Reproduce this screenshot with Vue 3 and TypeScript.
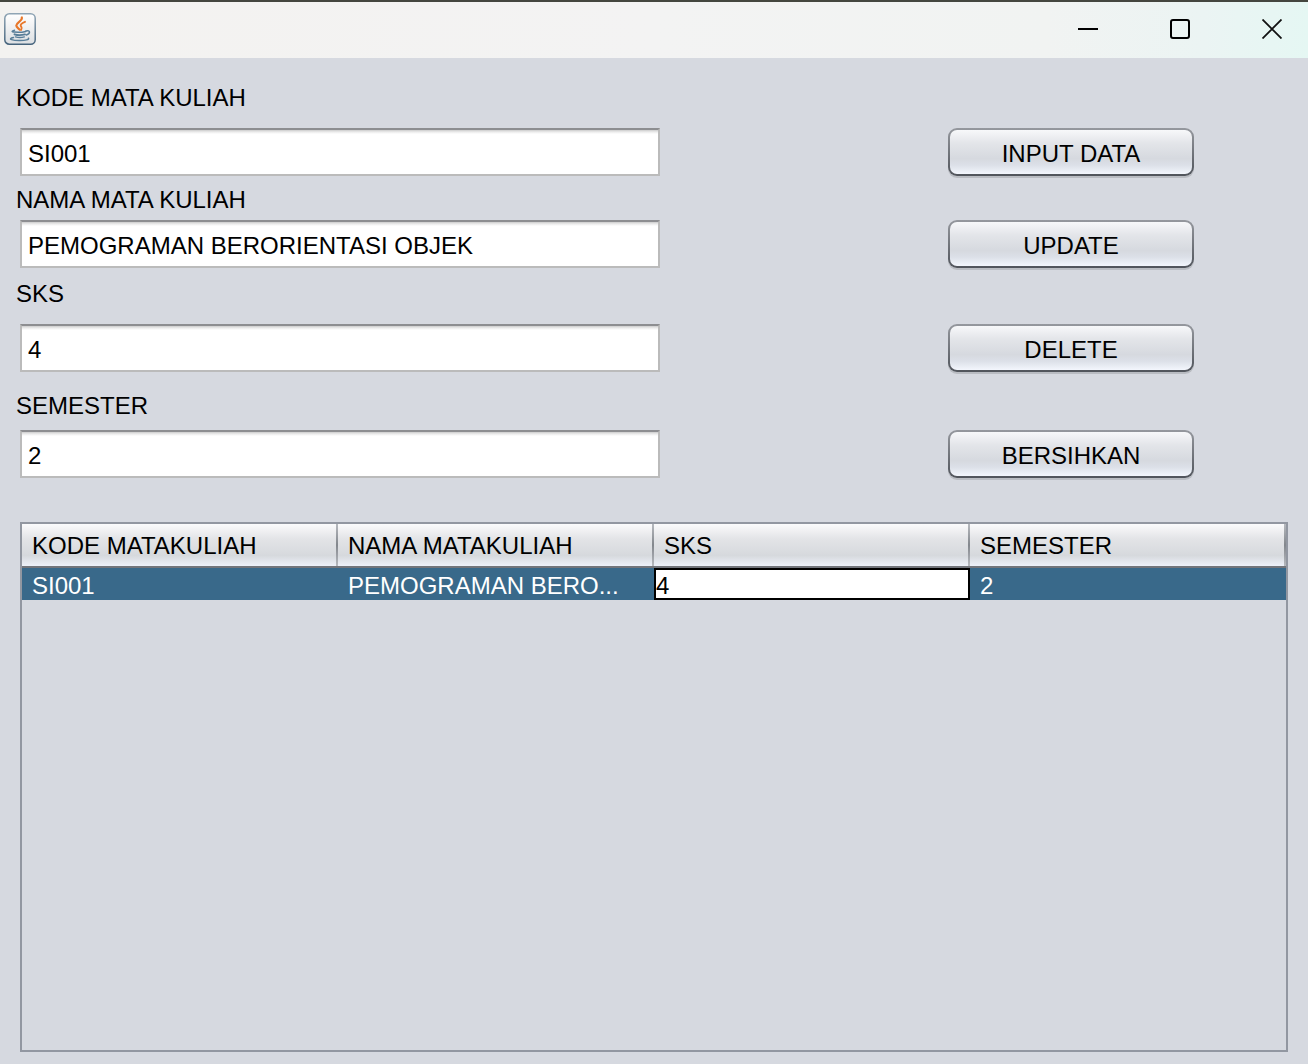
<script setup lang="ts">
import { ref } from 'vue'

interface Field {
  id: string
  label: string
  value: string
  action: string
}

const fields = ref<Field[]>([
  { id: 'kode', label: 'KODE MATA KULIAH', value: 'SI001', action: 'INPUT DATA' },
  { id: 'nama', label: 'NAMA MATA KULIAH', value: 'PEMOGRAMAN BERORIENTASI OBJEK', action: 'UPDATE' },
  { id: 'sks', label: 'SKS', value: '4', action: 'DELETE' },
  { id: 'semester', label: 'SEMESTER', value: '2', action: 'BERSIHKAN' },
])

const columns: string[] = ['KODE MATAKULIAH', 'NAMA MATAKULIAH', 'SKS', 'SEMESTER']
const editedSks = ref('4')
</script>

<template>
  <div class="window">
    <header class="titlebar">
      <svg class="app-icon" viewBox="0 0 32 32" aria-hidden="true">
        <defs>
          <linearGradient id="tile" x1="0" y1="0" x2="0" y2="1">
            <stop offset="0" stop-color="#ffffff" />
            <stop offset="1" stop-color="#dcdfe2" />
          </linearGradient>
          <linearGradient id="edge" x1="0" y1="0" x2="0" y2="1">
            <stop offset="0" stop-color="#8fa5b5" />
            <stop offset="1" stop-color="#45637c" />
          </linearGradient>
        </defs>
        <rect x="0.8" y="0.8" width="30.4" height="30.4" rx="4.5" fill="url(#tile)" stroke="url(#edge)" stroke-width="1.5" />
        <g fill="none" stroke="#e8772a" stroke-linecap="round">
          <path d="M17.800 4.500c1.200 3.200-5.500 5-5.500 8 0 1.800 2.400 2.800 3.400 4.200" stroke-width="2.200" />
          <path d="M21 8.800c-2.800 1.200-4.800 2.200-4.300 3.900.4 1.300 2.200 1.900.4 4.200" stroke-width="1.900" />
        </g>
        <g fill="none" stroke="#587d98" stroke-linecap="round">
          <path d="M10.500 17.300c-2.500.6-3.500 1.500-.2 1.800 3.700.3 8.200.1 11.400-.7" stroke-width="1.500" />
          <path d="M10.500 21.300c2.800 1 7.500.9 10.500.1" stroke-width="1.900" />
          <path d="M11.500 23.900c2.800.8 6 .8 8.800 0" stroke-width="1.500" />
          <path d="M22 18c4.600-1.300 4.500 2.700.4 4" stroke-width="1.500" />
          <path d="M9.500 24.600c-6.800 1.300-.5 3.100 6.500 3 5.500-.1 9.500-1 8.500-2.400" stroke-width="1.500" />
        </g>
      </svg>
      <div class="controls">
        <button type="button" class="control" aria-label="Minimize">
          <svg viewBox="0 0 20 20"><path d="M0 10h20" stroke="#000" stroke-width="2" /></svg>
        </button>
        <button type="button" class="control" aria-label="Maximize">
          <svg viewBox="0 0 20 20"><rect x="1" y="1" width="18" height="18" rx="2" fill="none" stroke="#000" stroke-width="2" /></svg>
        </button>
        <button type="button" class="control close" aria-label="Close">
          <svg viewBox="0 0 20 20"><path d="M.5.5l19 19M19.500.5l-19 19" stroke="#111" stroke-width="1.800" /></svg>
        </button>
      </div>
    </header>

    <main class="content">
      <form class="form" @submit.prevent>
        <div v-for="field in fields" :key="field.id" class="row" :class="field.id">
          <label class="label" :for="field.id">{{ field.label }}</label>
          <input :id="field.id" v-model="field.value" class="text" type="text" />
          <button type="button" class="action">{{ field.action }}</button>
        </div>
      </form>

      <div class="pane">
        <table class="grid">
          <thead>
            <tr>
              <th v-for="column in columns" :key="column" scope="col">{{ column }}</th>
            </tr>
          </thead>
          <tbody>
            <tr>
              <td>SI001</td>
              <td>PEMOGRAMAN BERO...</td>
              <td class="editing"><input v-model="editedSks" type="text" aria-label="SKS" /></td>
              <td>2</td>
            </tr>
          </tbody>
        </table>
      </div>
    </main>
  </div>
</template>

<style>
body {
  margin: 0;
  background: #d6d9e0;
}
</style>

<style scoped>
.window {
  display: flex;
  flex-direction: column;
  min-height: 100vh;
  box-sizing: border-box;
  background: #d6d9e0;
  color: #000;
  font: 24px/24px "Liberation Sans", Arial, sans-serif;
}

.titlebar {
  display: flex;
  align-items: center;
  justify-content: space-between;
  height: 54px;
  padding: 0 4px 2px;
  border-top: 2px solid #44463f;
  background: linear-gradient(90deg, #f3f2f0 0%, #f3f3f3 50%, #f1f3f2 80%, #ebf4f3 92%, #e5f7f3 100%);
}

.app-icon {
  width: 32px;
  height: 32px;
}

.controls {
  display: flex;
}

.control {
  display: flex;
  align-items: center;
  justify-content: center;
  width: 92px;
  height: 54px;
  margin: 0;
  padding: 0;
  border: 0;
  background: none;
}

.control.close {
  width: 64px;
  margin-left: 14px;
}

.control svg {
  width: 20px;
  height: 20px;
}

.content {
  display: flex;
  flex: 1;
  flex-direction: column;
  padding: 28px 20px 12px;
}

.row {
  display: grid;
  grid-template-columns: minmax(0, 20fr) minmax(0, 9fr) 246px;
  row-gap: 18px;
  margin-right: 94px;
}

.row.nama {
  row-gap: 8px;
  margin-top: 12px;
}

.row.sks {
  margin-top: 14px;
}

.row.semester {
  row-gap: 12px;
  margin-top: 22px;
}

.label {
  grid-column: 1 / -1;
  margin-left: -4px;
}

.text {
  box-sizing: border-box;
  width: 100%;
  height: 48px;
  padding: 4px 6px 0;
  border: 2px solid #bbb;
  border-top-color: #8d8e91;
  border-radius: 0;
  outline: 0;
  background: linear-gradient(#ccc 0, #ececec 2px, #fff 4px);
  color: inherit;
  font: inherit;
}

.action {
  grid-column: 3;
  height: 48px;
  padding: 4px 0 0;
  border: 2px solid transparent;
  border-radius: 9px;
  background:
    linear-gradient(#f7f8fa 0%, #e3e5e9 30%, #d6d9df 65%, #dce0e8 80%, #f3f6fd 100%) padding-box,
    linear-gradient(#95989e, #50545b) border-box;
  box-shadow: 0 2px 0 #b9bcc2;
  color: inherit;
  font: inherit;
}

.pane {
  flex: 1;
  margin-top: 44px;
  border: 2px solid #9297a1;
}

.grid {
  width: 100%;
  border-collapse: separate;
  border-spacing: 0;
  table-layout: fixed;
}

.grid th {
  box-sizing: border-box;
  height: 44px;
  padding: 2px 10px 0;
  border-bottom: 2px solid #72757b;
  background:
    linear-gradient(#b6b9be, #83878d 50%, #b6b9be) right / 2px 100% no-repeat,
    linear-gradient(#fbfbfc 0%, #e3e4e7 35%, #d6d9dd 75%, #edf1f9 100%);
  font-weight: 400;
  text-align: left;
  white-space: nowrap;
}

.grid td {
  box-sizing: border-box;
  height: 32px;
  padding: 4px 10px 0;
  overflow: hidden;
  background: #39698a;
  color: #fff;
  white-space: nowrap;
}

.grid td.editing {
  padding: 0;
}

.editing input {
  display: block;
  box-sizing: border-box;
  width: 100%;
  height: 32px;
  padding: 4px 0 0;
  border: 2px solid #000;
  border-radius: 0;
  outline: 0;
  background: #fff;
  color: #000;
  font: inherit;
}
</style>
